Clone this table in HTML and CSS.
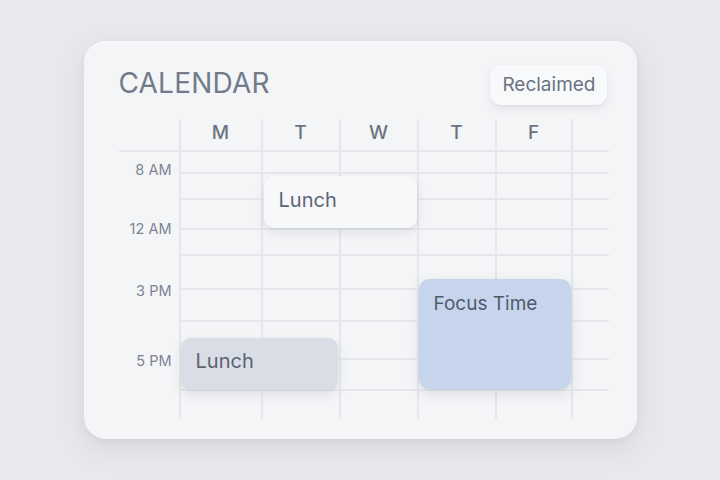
FILE: index.html
```html
<!DOCTYPE html>
<html>
<head>
<meta charset="utf-8">
<link rel="stylesheet" href="styles.css">
</head>
<body>
<div class="page">
  <div class="card">
    <div class="head">
      <div class="title">CALENDAR</div>
      <div class="badge">Reclaimed</div>
    </div>
    <div class="grid">
      <div class="day d1">M</div>
      <div class="day d2">T</div>
      <div class="day d3">W</div>
      <div class="day d4">T</div>
      <div class="day d5">F</div>

      <div class="vl v1"></div>
      <div class="vl v2"></div>
      <div class="vl v3"></div>
      <div class="vl v4"></div>
      <div class="vl v5"></div>
      <div class="vl v6"></div>

      <div class="hl hl-head"></div>
      <div class="hl h3"></div>
      <div class="hl h4"></div>
      <div class="hl h5"></div>
      <div class="hl h6"></div>
      <div class="hl h7"></div>
      <div class="hl h8"></div>
      <div class="hl h9"></div>
      <div class="hl h10"></div>

      <div class="time t1">8 AM</div>
      <div class="time t2">12 AM</div>
      <div class="time t3">3 PM</div>
      <div class="time t4">5 PM</div>

      <div class="event lunch-a">Lunch</div>
      <div class="event lunch-b">Lunch</div>
      <div class="event focus">Focus Time</div>
    </div>
  </div>
</div>
</body>
</html>
```

FILE: styles.css
```css
html, body {
  margin: 0;
  padding: 0;
}
body {
  background: #e8e9ec;
  font-family: "Inter", "Noto Sans", sans-serif;
  width: 720px;
  height: 480px;
  overflow: hidden;
}
.page {
  width: 720px;
  height: 480px;
  display: flex;
  align-items: center;
  justify-content: center;
}
.card {
  width: 553px;
  height: 398px;
  box-sizing: border-box;
  background: #f4f5f7;
  border-radius: 22px;
  padding: 24px 28px 20px 35px;
  box-shadow: 0 10px 28px rgba(60, 70, 90, 0.10), 0 2px 6px rgba(60, 70, 90, 0.06), inset 0 1px 0 #fafbfc;
  display: flex;
  flex-direction: column;
  margin-top: -1px;
}
.head {
  height: 40px;
  display: flex;
  align-items: center;
  justify-content: space-between;
  padding-left: 0;
}
.title {
  font-size: 28px;
  font-weight: 400;
  color: #717b89;
  letter-spacing: 0.2px;
  margin-top: -4px;
}
.badge {
  height: 40px;
  box-sizing: border-box;
  padding: 0 11px 0 12px;
  display: flex;
  align-items: center;
  font-size: 19px;
  color: #6a7381;
  background: #f8f9fb;
  border-radius: 11px;
  margin-right: 2px;
  box-shadow: 0 4px 10px rgba(60, 70, 90, 0.09), 0 1px 2px rgba(60, 70, 90, 0.06);
}
.grid {
  margin-top: 14px;
  display: grid;
  grid-template-columns: 61px 82px 78px 78px 78px 76px 37px;
  grid-template-rows: 32px 22px 26px 30px 26px 34px 32px 38px 31px 29px;
  position: relative;
}
.day {
  grid-row: 1;
  align-self: center;
  text-align: center;
  font-size: 19px;
  font-weight: 500;
  color: #6b7482;
  margin-top: -4px;
}
.d1 { grid-column: 2; }
.d2 { grid-column: 3; }
.d3 { grid-column: 4; }
.d4 { grid-column: 5; }
.d5 { grid-column: 6; }

.vl {
  grid-row: 1 / 11;
  border-left: 2px solid #e6e7eb;
  margin-left: -1px;
  width: 0;
}
.v1 { grid-column: 2; }
.v2 { grid-column: 3; }
.v3 { grid-column: 4; }
.v4 { grid-column: 5; }
.v5 { grid-column: 6; }
.v6 { grid-column: 7; }

.hl {
  grid-column: 2 / 8;
  border-top: 2px solid #e6e7eb;
  margin-top: -1px;
  height: 0;
  align-self: start;
}
.hl-head { grid-column: 1 / 8; grid-row: 2; }
.h3 { grid-row: 3; }
.h4 { grid-row: 4; }
.h5 { grid-row: 5; }
.h6 { grid-row: 6; }
.h7 { grid-row: 7; }
.h8 { grid-row: 8; }
.h9 { grid-row: 9; }
.h10 { grid-row: 10; }

.time {
  grid-column: 1;
  align-self: start;
  text-align: right;
  padding-right: 8px;
  font-size: 14.5px;
  line-height: 18px;
  color: #7d8593;
}
.t1 { grid-row: 2 / span 2; margin-top: 10px; }
.t2 { grid-row: 4 / span 2; margin-top: 21px; }
.t3 { grid-row: 6 / span 2; margin-top: 27px; }
.t4 { grid-row: 8 / span 2; margin-top: 31px; }

.event {
  border-radius: 10px;
  box-sizing: border-box;
  padding-left: 15px;
  font-size: 20px;
  display: flex;
  align-items: center;
  z-index: 1;
}
.lunch-a {
  grid-column: 3 / 5;
  grid-row: 3 / 5;
  margin: 3px 1px 1px 2px;
  padding-bottom: 3px;
  background: #f7f8fa;
  color: #5d6674;
  box-shadow: 0 5px 12px rgba(60, 70, 90, 0.10), 0 1px 3px rgba(60, 70, 90, 0.06);
}
.lunch-b {
  grid-column: 2 / 4;
  grid-row: 8 / 11;
  margin: 17px 2px 29px 1px;
  padding-bottom: 5px;
  background: #d9dee6;
  color: #5a6371;
  box-shadow: 0 5px 12px rgba(60, 70, 90, 0.10), 0 1px 3px rgba(60, 70, 90, 0.05);
}
.focus {
  grid-column: 5 / 7;
  grid-row: 6 / 10;
  margin: 24px 1px 1px 1px;
  background: #c6d5ec;
  color: #4e5b6c;
  font-size: 19px;
  align-items: flex-start;
  padding-top: 13px;
  box-shadow: 0 5px 14px rgba(60, 70, 90, 0.12), 0 1px 3px rgba(60, 70, 90, 0.06);
}
```
